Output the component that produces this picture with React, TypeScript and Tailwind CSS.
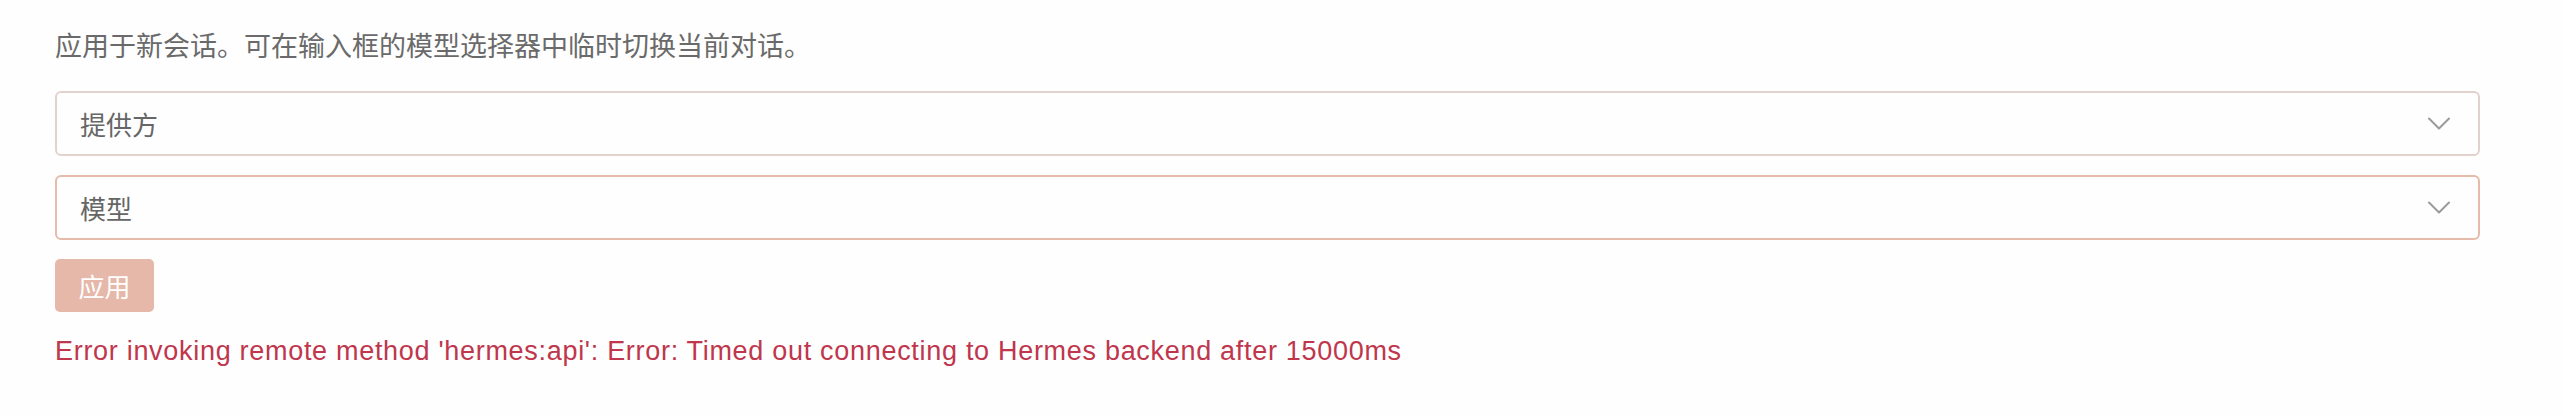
const ChevronDown = () => (
  <svg width="22" height="13" viewBox="0 0 22 13" fill="none" className="shrink-0">
    <path d="M1 1.5 L11 11.5 L21 1.5" stroke="#9a9a9a" strokeWidth="2" strokeLinecap="round" strokeLinejoin="round" />
  </svg>
);

interface SelectBoxProps {
  label: string;
  borderClass: string;
}

const SelectBox = ({ label, borderClass }: SelectBoxProps) => (
  <div
    className={`flex h-[65px] items-center justify-between rounded-[6px] border-2 bg-[#fefefe] pl-[23px] pr-[28px] ${borderClass}`}
  >
    <span className="text-[26px] leading-none text-[#666666]">{label}</span>
    <ChevronDown />
  </div>
);

export default function App() {
  return (
    <div className="min-h-[416px] bg-[#fefefe] pl-[55px] pt-[25px] font-['Noto_Sans_CJK_SC','Noto_Sans',sans-serif]">
      <p className="text-[27px] leading-[39px] text-[#6a6a6a]">
        应用于新会话。可在输入框的模型选择器中临时切换当前对话。
      </p>

      <div className="mt-[27px] flex w-[2425px] flex-col gap-[19px]">
        <SelectBox label="提供方" borderClass="border-[#e2d2ce]" />
        <SelectBox label="模型" borderClass="border-[#e6bba9]" />
      </div>

      <button
        type="button"
        disabled
        className="mt-[19px] flex h-[53px] w-[99px] items-center justify-center rounded-[5px] bg-[#e5b8a9] text-[26px] leading-none text-white"
      >
        应用
      </button>

      <p className="mt-[20px] font-['Liberation_Sans','Noto_Sans_CJK_SC',sans-serif] text-[27px] leading-[39px] tracking-[0.7px] text-[#bf364d]">
        Error invoking remote method 'hermes:api': Error: Timed out connecting to Hermes backend after 15000ms
      </p>
    </div>
  );
}
